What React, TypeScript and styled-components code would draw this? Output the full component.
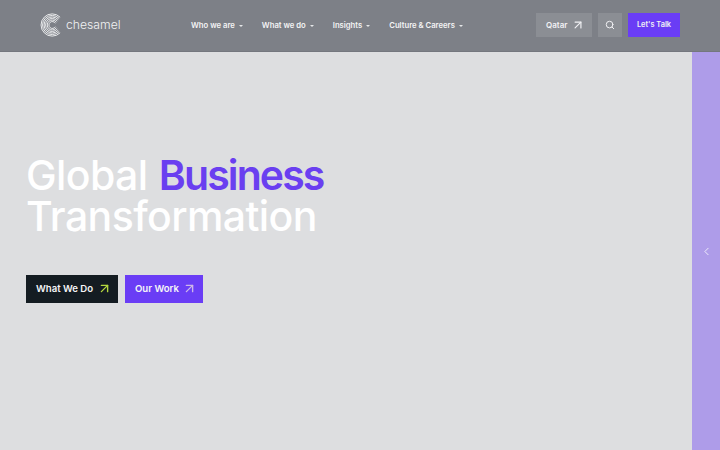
import { ArrowUpRight, ChevronLeft, Search } from 'lucide-react'
import styled, { createGlobalStyle } from 'styled-components'

const GlobalStyle = createGlobalStyle`
  html, body {
    margin: 0;
    padding: 0;
    width: 720px;
    height: 450px;
    overflow: hidden;
    background: #dddee0;
    font-family: 'Inter', 'Liberation Sans', sans-serif;
  }
  * {
    box-sizing: border-box;
  }
`

const Page = styled.div`
  width: 720px;
  height: 450px;
  display: flex;
  flex-direction: column;
`

const Header = styled.header`
  height: 52px;
  flex: none;
  background: #7d8087;
  border-bottom: 1px solid #74777e;
  display: flex;
  align-items: center;
  padding: 0 40px 2px 40px;
`

const Logo = styled.div`
  width: 151px;
  display: flex;
  align-items: center;
  gap: 3px;
  color: #f1f2f3;
  font-size: 12.2px;
  font-weight: 300;
`

const Nav = styled.nav`
  display: flex;
  align-items: center;
  gap: 19px;
  flex: 1;
  padding-top: 1px;
`

const NavItem = styled.a`
  display: flex;
  align-items: center;
  gap: 4px;
  color: #f4f4f5;
  font-size: 7.7px;
  font-weight: 600;
  white-space: nowrap;
  &::after {
    content: '';
    margin-top: 1px;
    border-left: 2.5px solid transparent;
    border-right: 2.5px solid transparent;
    border-top: 2.5px solid #e6e7e9;
  }
`

const Actions = styled.div`
  display: flex;
  gap: 6px;
`

const ActionButton = styled.a<{ $wide?: boolean; $accent?: boolean }>`
  height: 24px;
  width: ${({ $wide, $accent }) => ($wide ? '56px' : $accent ? '52px' : '24px')};
  padding: ${({ $wide }) => ($wide ? '0 7px 0 10px' : '0')};
  display: flex;
  align-items: center;
  justify-content: ${({ $wide }) => ($wide ? 'space-between' : 'center')};
  background: ${({ $accent }) => ($accent ? '#6a3df5' : '#8b8e94')};
  color: #f1f1f4;
  font-size: ${({ $accent }) => ($accent ? '7.4px' : '8px')};
  font-weight: 600;
`

const Body = styled.div`
  flex: 1;
  display: flex;
`

const Hero = styled.main`
  flex: 1;
  padding: 103px 0 0 26px;
`

const Heading = styled.h1`
  margin: 0;
  color: #ffffff;
  font-size: 41px;
  line-height: 41px;
  font-weight: 500;
  letter-spacing: -0.6px;
`

const Accent = styled.span`
  margin-left: 1px;
  color: #6a3ff0;
  font-weight: 600;
  letter-spacing: -1.9px;
`

const Buttons = styled.div`
  display: flex;
  gap: 7px;
  margin-top: 38px;
`

const CtaButton = styled.a<{ $dark?: boolean }>`
  height: 28px;
  width: ${({ $dark }) => ($dark ? '92px' : '78px')};
  padding: 0 6px 1px 10px;
  display: flex;
  align-items: center;
  justify-content: space-between;
  background: ${({ $dark }) => ($dark ? '#141c22' : '#6a3df5')};
  color: #f5f5f7;
  font-size: 9.6px;
  font-weight: 600;
  svg {
    color: ${({ $dark }) => ($dark ? '#b5d83e' : '#cdb6e8')};
  }
`

const SidePanel = styled.aside`
  width: 28px;
  background: #ae9ce9;
  display: flex;
  align-items: center;
  justify-content: center;
  color: #f0edfb;
`

const LogoMark = () => (
  <svg width="23" height="24" viewBox="0 0 24 24" fill="none" stroke="#f4f5f6" strokeWidth="0.95">
    <path d="M21 3.9A11.6 11.6 0 1 0 21 20.1" />
    <path d="M20 5.2A10 10 0 1 0 20 18.8" />
    <path d="M19 6.5A8.4 8.4 0 1 0 19 17.5" />
    <path d="M18 7.8A6.8 6.8 0 1 0 18 16.2" />
    <path d="M17 9A5.2 5.2 0 1 0 17 15" />
    <path d="M16 10.2A3.6 3.6 0 1 0 16 13.8" />
  </svg>
)

const App = () => {
  return (
    <Page>
      <GlobalStyle />
      <Header>
        <Logo>
          <LogoMark />
          chesamel
        </Logo>
        <Nav>
          <NavItem>Who we are</NavItem>
          <NavItem>What we do</NavItem>
          <NavItem>Insights</NavItem>
          <NavItem>Culture &amp; Careers</NavItem>
        </Nav>
        <Actions>
          <ActionButton $wide>
            Qatar
            <ArrowUpRight size={14} strokeWidth={2} />
          </ActionButton>
          <ActionButton>
            <Search size={10} strokeWidth={2.4} />
          </ActionButton>
          <ActionButton $accent>Let's Talk</ActionButton>
        </Actions>
      </Header>
      <Body>
        <Hero>
          <Heading>
            Global <Accent>Business</Accent>
            <br />
            Transformation
          </Heading>
          <Buttons>
            <CtaButton $dark>
              What We Do
              <ArrowUpRight size={15} strokeWidth={2.2} />
            </CtaButton>
            <CtaButton>
              Our Work
              <ArrowUpRight size={15} strokeWidth={2.2} />
            </CtaButton>
          </Buttons>
        </Hero>
        <SidePanel>
          <ChevronLeft size={13} strokeWidth={1.8} />
        </SidePanel>
      </Body>
    </Page>
  )
}

export default App
